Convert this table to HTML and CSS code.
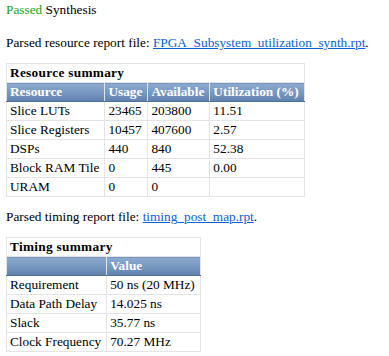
FILE: index.html
```html
<!DOCTYPE html>
<html>
<head>
<meta charset="utf-8">
<link rel="stylesheet" href="styles.css">
</head>
<body>
<p class="status"><span class="pass">Passed</span> Synthesis</p>
<p class="line">Parsed resource report file: <a href="#">FPGA_Subsystem_utilization_synth.rpt</a>.</p>
<table class="summary">
  <tr><td class="title" colspan="4">Resource summary</td></tr>
  <tr class="head"><th>Resource</th><th>Usage</th><th>Available</th><th>Utilization (%)</th></tr>
  <tr><td>Slice LUTs</td><td>23465</td><td>203800</td><td>11.51</td></tr>
  <tr><td>Slice Registers</td><td>10457</td><td>407600</td><td>2.57</td></tr>
  <tr><td>DSPs</td><td>440</td><td>840</td><td>52.38</td></tr>
  <tr><td>Block RAM Tile</td><td>0</td><td>445</td><td>0.00</td></tr>
  <tr><td>URAM</td><td>0</td><td>0</td><td></td></tr>
</table>
<p class="line">Parsed timing report file: <a href="#">timing_post_map.rpt</a>.</p>
<table class="summary">
  <tr><td class="title" colspan="2">Timing summary</td></tr>
  <tr class="head"><th></th><th>Value</th></tr>
  <tr><td>Requirement</td><td>50 ns (20 MHz)</td></tr>
  <tr><td>Data Path Delay</td><td>14.025 ns</td></tr>
  <tr><td>Slack</td><td>35.77 ns</td></tr>
  <tr><td>Clock Frequency</td><td>70.27 MHz</td></tr>
</table>
</body>
</html>
```
FILE: styles.css
```css
body {
  margin: 2px 6px;
  font-family: "Liberation Serif", "Times New Roman", serif;
  font-size: 13.3px;
  color: #000;
  background: #fff;
}
p {
  margin: 0;
}
.status {
  margin-bottom: 17px;
}
.pass {
  color: #1aa31a;
}
.line {
  margin-bottom: 12px;
}
a {
  color: #0b5fd6;
}
.summary {
  border-collapse: collapse;
  border: 1px solid #e4e4e4;
  margin-bottom: 12px;
}
.summary td, .summary th {
  border: 1px solid #e4e4e4;
  padding: 1px 5px 1px 3px;
  line-height: 16px;
  height: 16px;
  text-align: left;
  white-space: nowrap;
}
.summary .title {
  font-weight: bold;
  letter-spacing: 0.3px;
}
.head th {
  color: #fff;
  font-weight: bold;
  background: linear-gradient(#8eabcf, #7294be 60%, #5f81ab);
  border-top-color: #fff;
  border-bottom: 1px solid #4d6e98;
}
```
